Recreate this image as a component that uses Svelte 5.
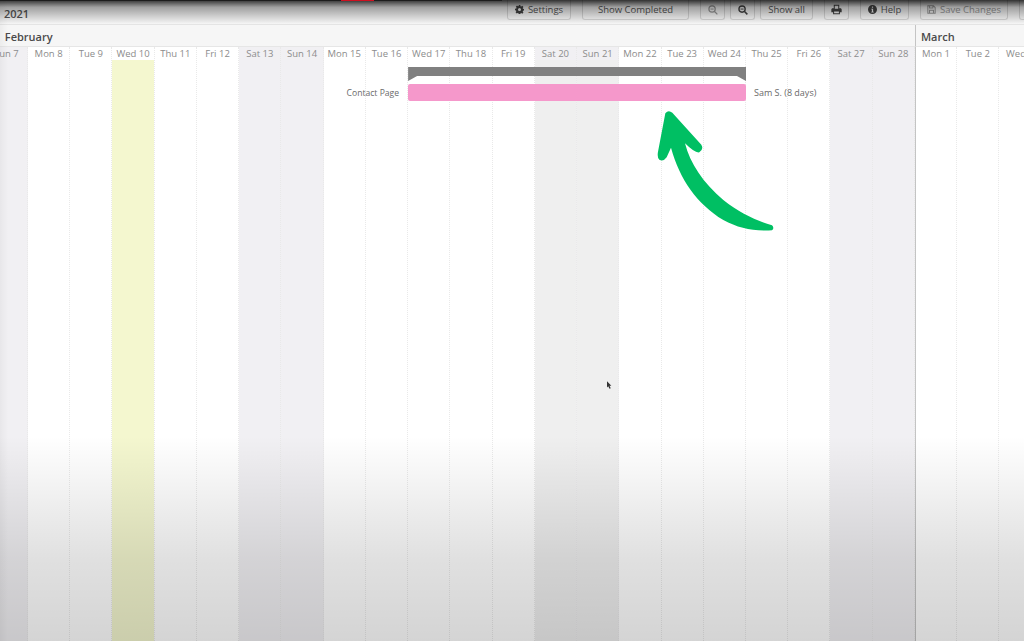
<script>
  const week = ['Sun', 'Mon', 'Tue', 'Wed', 'Thu', 'Fri', 'Sat'];

  // Feb 7 2021 was a sunday, march follows on the 1st
  const days = [];
  for (let i = 0; i < 25; i++) {
    const inFeb = i < 22;
    const name = week[i % 7];
    days.push({
      label: `${name} ${inFeb ? i + 7 : i - 21}`,
      weekend: name === 'Sat' || name === 'Sun',
      today: i === 3,
      first: i === 22,
      hover: i === 13 || i === 14
    });
  }
</script>

<div class="page">
  <div class="red-strip">
    <span></span>
  </div>

  <div class="toolbar">
    <div class="year">2021</div>
    <div class="group">
      <button class="wide-settings">
        <svg viewBox="0 0 16 16" width="9" height="9"><path fill="#444" fill-rule="evenodd" d="M6.600 0h2.800l.4 2.200 1.300.6L13 1.500l2 2-1.300 1.900.5 1.300 2.300.4v2.800l-2.300.4-.5 1.300 1.300 1.900-2 2-1.900-1.300-1.300.5-.4 2.300H6.600l-.4-2.300-1.300-.5L3 15l-2-2 1.300-1.900-.5-1.300L0 9.400V6.600l2.300-.4.5-1.300L1.500 3l2-2 1.900 1.300 1.300-.6zM8 5.300a2.700 2.700 0 1 0 0 5.400 2.700 2.700 0 0 0 0-5.400z"/></svg>
        Settings
      </button>
    </div>
    <div class="group">
      <button class="wide-completed">Show Completed</button>
    </div>
    <div class="group">
      <button class="square faded">
        <svg viewBox="0 0 16 16" width="10" height="10"><circle cx="6.500" cy="6.500" r="5" fill="none" stroke="#999" stroke-width="2"/><path d="M10 10l5 5" stroke="#999" stroke-width="2"/><path d="M4 6.500h5" stroke="#999" stroke-width="1.500"/></svg>
      </button>
      <button class="square">
        <svg viewBox="0 0 16 16" width="10" height="10"><circle cx="6.500" cy="6.500" r="5" fill="none" stroke="#444" stroke-width="2.200"/><path d="M10 10l5 5" stroke="#444" stroke-width="2.400"/><path d="M4 6.500h5" stroke="#444" stroke-width="1.500"/></svg>
      </button>
      <button class="wide-all">Show all</button>
    </div>
    <div class="group">
      <button class="square">
        <svg viewBox="0 0 16 16" width="11" height="11"><path fill="#444" fill-rule="evenodd" d="M4 1h8v5h2.500l1 1.500V12H13v3H3v-3H.5V7.500L1.500 6H4zm1.500 1.500V7h5V2.500zM4.500 11v2.500h7V11z"/></svg>
      </button>
    </div>
    <div class="group">
      <button class="wide-help">
        <svg viewBox="0 0 16 16" width="9" height="9"><path fill="#444" fill-rule="evenodd" d="M8 0a8 8 0 1 1 0 16A8 8 0 0 1 8 0zM6.900 2.500v2.400h2.200V2.500zM5.800 6.500v1.500h1.100v4H5.800v1.500h4.400V12H9.100V6.500z"/></svg>
        Help
      </button>
    </div>
    <div class="group">
      <button class="wide-save faded">
        <svg viewBox="0 0 16 16" width="9" height="9"><path fill="none" stroke="#999" stroke-width="1.800" d="M1.500 1.500h10l3 3v10h-13zM4.500 1.500v4h6v-4M4.500 14.500v-5h7v5"/></svg>
        Save Changes
      </button>
    </div>
    <div class="group">
      <button class="square"></button>
    </div>
  </div>

  <div class="timeline">
    <div class="month feb">February</div>
    <div class="month mar">March</div>

    {#each days as day, i}
      <div class="day" class:weekend={day.weekend} class:first={day.first} style="grid-column: {i + 1}">
        <div class="day-name">{day.label}</div>
        <div class="day-body" class:today={day.today} class:hover={day.hover}></div>
      </div>
    {/each}

    <div class="rows">
      <div class="bracket"></div>
      <div class="task-label left">Contact Page</div>
      <div class="task"></div>
      <div class="task-label right">Sam S. (8 days)</div>
    </div>
  </div>

  <svg class="arrow" viewBox="0 0 450 420" width="150" height="140">
    <path fill="#00bf63" d="M76 40Q85 28 97 38L184 134Q192 148 178 157Q165 160 135 130C150 190 190 250 250 300C300 340 350 362 396 376Q404 384 396 391C340 394 296 385 250 360C170 310 120 240 93 143L80 172Q70 186 58 179Q50 172 55 150Z"/>
  </svg>

  <svg class="cursor" viewBox="0 0 8 12" width="5" height="8">
    <path fill="#333" d="M0 0l7 7H4l2 4-2 1-2-4-2 2z"/>
  </svg>

  <div class="shade-top"></div>
  <div class="shade-bottom"></div>
  <div class="shade-left"></div>
</div>

<style>
  :global(body) {
    margin: 0;
    background: #fff;
  }

  .page {
    position: relative;
    width: 1024px;
    height: 641px;
    overflow: hidden;
    display: flex;
    flex-direction: column;
    font-family: "Open Sans", "Liberation Sans", sans-serif;
    background: #fff;
  }

  .red-strip {
    position: absolute;
    top: 0;
    left: 0;
    width: 502px;
    height: 1px;
    z-index: 5;
    background: #1d1d1d;
  }

  .red-strip span {
    display: block;
    margin-left: 341px;
    width: 33px;
    height: 1px;
    background: #d01020;
  }

  .toolbar {
    height: 24px;
    flex: none;
    display: flex;
    align-items: flex-start;
    gap: 11px;
    background: #f6f6f6;
    border-bottom: 1px solid #e4e4e4;
  }

  .year {
    flex: none;
    box-sizing: border-box;
    width: 496px;
    padding: 4px 0 0 4px;
    font-size: 11px;
    font-weight: 600;
    line-height: 20px;
    color: #555;
  }

  .group {
    display: flex;
    gap: 5px;
    flex: none;
  }

  button {
    height: 20px;
    padding: 0;
    display: flex;
    align-items: center;
    justify-content: center;
    gap: 4px;
    font: 9.500px "Open Sans", "Liberation Sans", sans-serif;
    color: #555;
    background: #f7f7f7;
    border: 1px solid #d6d6d6;
    border-top: none;
    border-radius: 0 0 3px 3px;
    flex: none;
  }

  .faded {
    color: #999;
  }

  .square {
    width: 25px;
  }

  .wide-settings {
    width: 64px;
  }

  .wide-completed {
    width: 107px;
  }

  .wide-all {
    width: 53px;
  }

  .wide-help {
    width: 49px;
  }

  .wide-save {
    width: 88px;
  }

  .timeline {
    flex: 1;
    display: grid;
    grid-template-columns: repeat(25, 42.24px);
    grid-template-rows: 22px 1fr;
    margin-left: -14.24px;
    position: relative;
  }

  .month {
    grid-row: 1;
    font-size: 11px;
    font-weight: 600;
    line-height: 23px;
    color: #4a4a4a;
    background: #f6f6f6;
    border-bottom: 1px solid #e6e6e6;
  }

  .feb {
    grid-column: 1 / 23;
    padding-left: 19px;
  }

  .mar {
    grid-column: 23 / 26;
    padding-left: 5px;
    border-left: 1px solid #c4c4c4;
  }

  .day {
    grid-row: 2;
    display: flex;
    flex-direction: column;
    border-right: 1px dotted #e9e9e9;
    box-sizing: border-box;
    min-width: 0;
  }

  .day.first {
    border-left: 1px solid #c4c4c4;
  }

  .day-name {
    height: 13px;
    font-size: 9.500px;
    line-height: 14px;
    color: #8c8c8c;
    text-align: center;
    white-space: nowrap;
  }

  .day-body {
    flex: 1;
  }

  .today {
    background: #f4f7cf;
  }

  .hover {
    background: #efefef;
  }

  .weekend {
    background: #f1f0f3;
  }

  .rows {
    grid-row: 2;
    grid-column: 11 / 19;
    margin-top: 20px;
    position: relative;
    z-index: 1;
    height: 34px;
  }

  .bracket {
    height: 14px;
    background: #808080;
    clip-path: polygon(0 0, 100% 0, 100% 100%, calc(100% - 9px) 9px, 9px 9px, 0 100%);
  }

  .task {
    position: absolute;
    top: 17px;
    left: 0;
    right: 0;
    height: 17px;
    background: #f598cb;
    border-radius: 2px;
  }

  .task-label {
    position: absolute;
    top: 17px;
    font-size: 9px;
    line-height: 17px;
    color: #6a6a6a;
    white-space: nowrap;
  }

  .left {
    right: calc(100% + 9px);
    top: 18px;
    font-size: 8.600px;
  }

  .right {
    left: calc(100% + 8px);
  }

  .arrow {
    position: absolute;
    left: 640px;
    top: 100px;
    z-index: 3;
  }

  .cursor {
    position: absolute;
    left: 607px;
    top: 381px;
    z-index: 3;
  }

  .shade-top,
  .shade-bottom,
  .shade-left {
    position: absolute;
    pointer-events: none;
    z-index: 4;
  }

  .shade-top {
    top: 0;
    left: 0;
    right: 0;
    height: 24px;
    background: linear-gradient(rgba(0, 0, 0, 0.8), rgba(0, 0, 0, 0.35) 30%, rgba(0, 0, 0, 0));
  }

  .shade-bottom {
    left: 0;
    right: 0;
    bottom: 0;
    height: 205px;
    background: linear-gradient(rgba(0, 0, 0, 0), rgba(0, 0, 0, 0.12) 60%, rgba(0, 0, 0, 0.17));
  }

  .shade-left {
    top: 0;
    bottom: 0;
    left: 0;
    width: 8px;
    background: linear-gradient(90deg, rgba(0, 0, 0, 0.04), rgba(0, 0, 0, 0));
  }
</style>
